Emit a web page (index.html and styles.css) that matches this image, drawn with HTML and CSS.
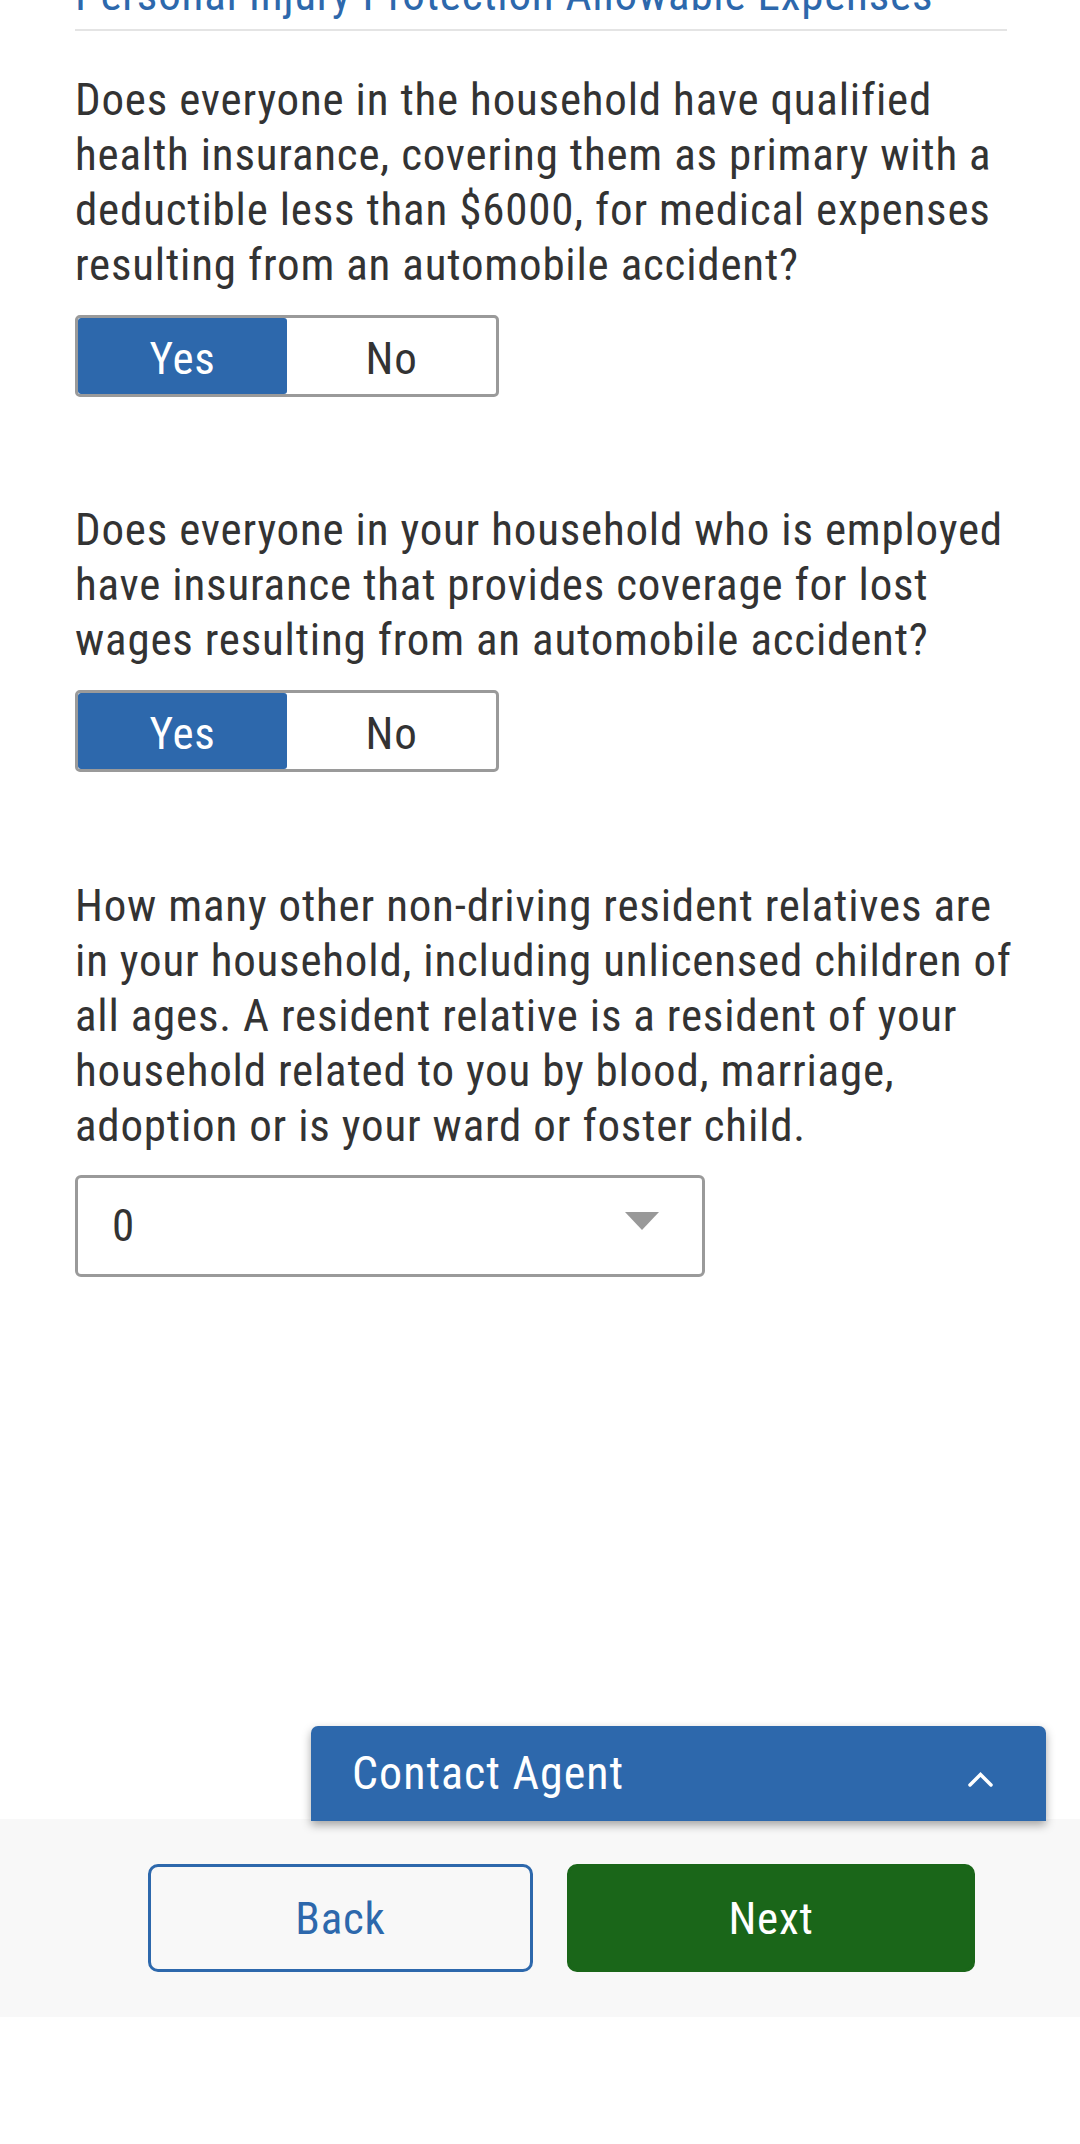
FILE: index.html
```html
<!DOCTYPE html>
<html lang="en">
<head>
<meta charset="utf-8">
<title>Personal Injury Protection Allowable Expenses</title>
<link rel="stylesheet" href="styles.css">
</head>
<body>
<main class="page">
  <h2 class="section-title">Personal Injury Protection Allowable Expenses</h2>

  <div class="question">
    <p class="q-text">Does everyone in the household have qualified health insurance, covering them as primary with a deductible less than $6000, for medical expenses resulting from an automobile accident?</p>
    <div class="toggle">
      <span class="opt opt-on">Yes</span>
      <span class="opt">No</span>
    </div>
  </div>

  <div class="question">
    <p class="q-text">Does everyone in your household who is employed have insurance that provides coverage for lost wages resulting from an automobile accident?</p>
    <div class="toggle">
      <span class="opt opt-on">Yes</span>
      <span class="opt">No</span>
    </div>
  </div>

  <div class="question">
    <p class="q-text">How many other non-driving resident relatives are in your household, including unlicensed children of all ages. A resident relative is a resident of your household related to you by blood, marriage, adoption or is your ward or foster child.</p>
    <div class="select">
      <span class="select-value">0</span>
      <svg class="select-arrow" width="34" height="18" viewBox="0 0 34 18"><polygon points="0,0 34,0 17,18" fill="#999"/></svg>
    </div>
  </div>
</main>

<footer class="footer">
  <div class="contact-bar">
    <span class="contact-label">Contact Agent</span>
    <svg class="contact-chevron" width="25" height="15" viewBox="0 0 25 15"><polyline points="2,13 12.5,2.5 23,13" fill="none" stroke="#fff" stroke-width="3.5" stroke-linecap="round" stroke-linejoin="miter"/></svg>
  </div>
  <div class="actions">
    <button class="btn btn-back">Back</button>
    <button class="btn btn-next">Next</button>
  </div>
</footer>
</body>
</html>
```
FILE: styles.css
```css
html, body {
  margin: 0;
  padding: 0;
  background: #fff;
}
body {
  font-family: "Roboto Condensed", "Roboto", "Liberation Sans", sans-serif;
  letter-spacing: 0.8px;
  color: #333;
  overflow: hidden;
}
.page {
  padding: 0 73px 0 75px;
}
.section-title {
  margin: -31px 0 0;
  font-size: 45px;
  line-height: 52px;
  font-weight: 400;
  color: #2d68ac;
  padding-bottom: 8px;
  border-bottom: 2px solid #e4e4e4;
  white-space: nowrap;
}
.question {
  margin-top: 105px;
}
.question:first-of-type {
  margin-top: 41px;
}
.question:nth-of-type(3) {
  margin-top: 106px;
}
.q-text {
  margin: 0 -22px 0 0;
  font-size: 45px;
  line-height: 55px;
}
.toggle {
  margin-top: 23px;
  width: 418px;
  height: 76px;
  border: 3px solid #9a9a9a;
  border-radius: 5px;
  display: flex;
  overflow: hidden;
  background: #fff;
}
.opt {
  flex: 1;
  text-align: center;
  font-size: 45px;
  line-height: 70px;
  padding-top: 6px;
  color: #333;
}
.opt-on {
  background: #2d68ac;
  color: #fff;
  border-radius: 3px;
}
.select {
  margin-top: 22px;
  width: 547px;
  height: 96px;
  border: 3px solid #9a9a9a;
  border-radius: 6px;
  display: flex;
  align-items: center;
  justify-content: space-between;
  padding: 0 43px 0 34px;
}
.select-value {
  font-size: 45px;
  line-height: 96px;
}
.select-arrow {
  display: block;
  margin-bottom: 10px;
}
.footer {
  position: relative;
  margin-top: 542px;
  background: #f8f8f8;
  height: 198px;
}
.contact-bar {
  position: absolute;
  left: 311px;
  bottom: calc(100% - 2px);
  width: 735px;
  height: 95px;
  box-sizing: border-box;
  padding: 0 53px 0 41px;
  background: #2d68ac;
  color: #fff;
  border-radius: 7px 7px 0 0;
  box-shadow: 0 4px 10px rgba(0, 0, 0, 0.35);
  display: flex;
  align-items: center;
  justify-content: space-between;
}
.contact-label {
  font-size: 46px;
  letter-spacing: 1px;
  line-height: 95px;
}
.contact-chevron {
  display: block;
  margin-top: 12px;
}
.actions {
  display: flex;
  gap: 34px;
  padding: 45px 0 0 148px;
}
.btn {
  font-family: inherit;
  letter-spacing: inherit;
  font-size: 45px;
  height: 108px;
  border: 3px solid #2d68ac;
  border-radius: 10px;
  background: transparent;
  color: #2d68ac;
  padding: 0;
  margin: 0;
}
.btn-back {
  width: 385px;
}
.btn-next {
  width: 408px;
  background: #1a6619;
  border-color: #1a6619;
  color: #fff;
}
```
